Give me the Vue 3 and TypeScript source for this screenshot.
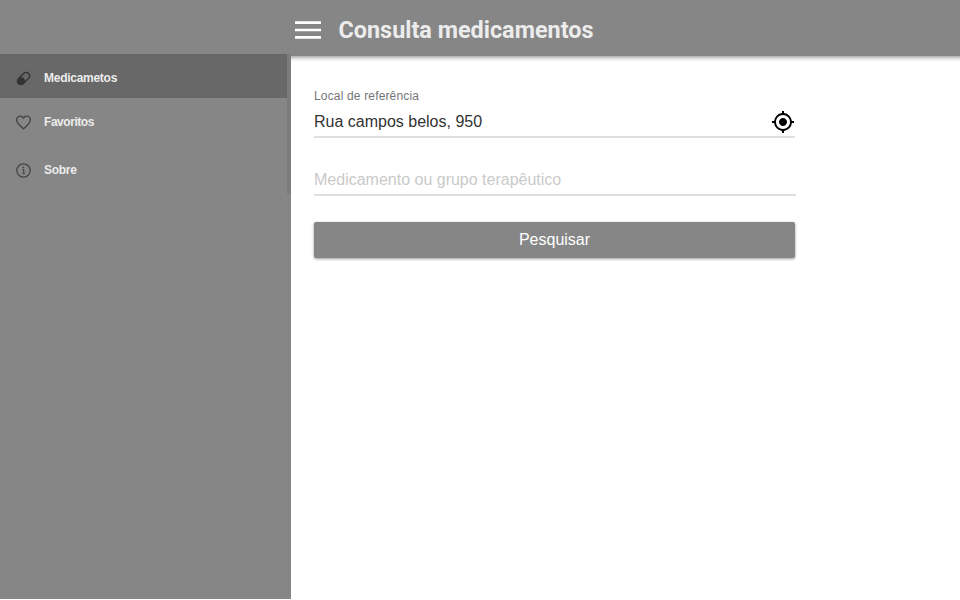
<script setup lang="ts">
import { ref } from 'vue'

interface MenuItem {
  id: string
  label: string
}

const items: MenuItem[] = [
  { id: 'pill', label: 'Medicametos' },
  { id: 'heart', label: 'Favoritos' },
  { id: 'info', label: 'Sobre' },
]
const active = ref('pill')
const place = ref('Rua campos belos, 950')
const query = ref('')
</script>

<template>
  <div class="app">
    <header class="topbar">
      <button class="menu" aria-label="Menu">
        <svg viewBox="0 0 26 18">
          <path d="M0 1.6h26M0 9h26M0 16.4h26" stroke="#fff" stroke-width="2.6" />
        </svg>
      </button>
      <h1>Consulta medicamentos</h1>
    </header>
    <div class="body">
      <aside class="sidebar">
        <nav class="nav">
          <a
            v-for="item in items"
            :key="item.id"
            class="item"
            :class="[item.id, { active: item.id === active }]"
            @click="active = item.id"
          >
            <svg v-if="item.id === 'pill'" class="icon" viewBox="0 0 16 16">
              <g transform="rotate(45 8 8)">
                <rect x="4.7" y="1.2" width="6.6" height="13.6" rx="3.3" fill="none" stroke="#333" stroke-width="1.3" />
                <path d="M4.7 9L8 7.4L11.3 9V11.5a3.3 3.3 0 0 1-6.6 0z" fill="#333" />
              </g>
            </svg>
            <svg v-else-if="item.id === 'heart'" class="icon" viewBox="0 0 16 16">
              <path d="M8 13.9C4.2 10.8 1.5 8.4 1.5 5.4A3.4 3.4 0 0 1 4.9 2C6.2 2 7.3 2.7 8 3.7C8.7 2.7 9.8 2 11.1 2A3.4 3.4 0 0 1 14.5 5.4C14.5 8.4 11.8 10.8 8 13.9Z" fill="none" stroke="#444" stroke-width="1.3" />
            </svg>
            <svg v-else class="icon" viewBox="0 0 16 16">
              <circle cx="8" cy="8" r="6.3" fill="none" stroke="#444" stroke-width="1.2" />
              <path d="M7 7.2h1.2v3.6M6.9 10.9h2.4" fill="none" stroke="#444" stroke-width="1" />
              <circle cx="7.9" cy="5.1" r=".75" fill="#444" />
            </svg>
            <span>{{ item.label }}</span>
          </a>
        </nav>
        <div class="track"></div>
      </aside>
      <main class="content">
        <form class="form" @submit.prevent>
          <label class="label" for="place">Local de referência</label>
          <div class="field">
            <input id="place" v-model="place" type="text" />
            <svg class="locate" viewBox="0 0 24 24">
              <path d="M12 8c-2.21 0-4 1.79-4 4s1.79 4 4 4 4-1.79 4-4-1.79-4-4-4zm8.94 3A8.994 8.994 0 0 0 13 3.06V1h-2v2.06A8.994 8.994 0 0 0 3.06 11H1v2h2.06A8.994 8.994 0 0 0 11 20.94V23h2v-2.06A8.994 8.994 0 0 0 20.94 13H23v-2h-2.06zM12 19c-3.87 0-7-3.13-7-7s3.13-7 7-7 7 3.13 7 7-3.13 7-7 7z" />
            </svg>
          </div>
          <div class="field second">
            <input v-model="query" type="text" placeholder="Medicamento ou grupo terapêutico" />
          </div>
          <button class="submit" type="submit">Pesquisar</button>
        </form>
      </main>
    </div>
  </div>
</template>

<style>
body {
  background: #fff;
  overflow: hidden;
}
</style>

<style scoped>
.app {
  width: 960px;
  height: 599px;
  display: flex;
  flex-direction: column;
  font-family: "Liberation Sans", Arial, sans-serif;
  background: #fff;
}
.topbar {
  height: 54px;
  flex: none;
  box-sizing: border-box;
  display: flex;
  align-items: center;
  padding: 6px 0 0 295px;
  gap: 17.5px;
  background: #868686;
}
.menu {
  width: 26px;
  height: 18px;
  padding: 0;
  border: 0;
  background: none;
}
.menu svg {
  display: block;
  width: 26px;
  height: 18px;
}
h1 {
  margin: 0;
  font: 700 23.4px/30px Roboto, sans-serif;
  color: #ececec;
}
.body {
  flex: 1;
  display: flex;
}
.sidebar {
  width: 291px;
  flex: none;
  display: flex;
  background: #868686;
}
.nav {
  width: 287px;
}
.track {
  width: 4px;
  height: 140px;
  background: #7b7b7b;
}
.item {
  display: flex;
  align-items: center;
  height: 44px;
  box-sizing: border-box;
  padding: 4px 0 0 15px;
  gap: 12px;
  font-size: 12px;
  font-weight: 700;
  letter-spacing: -0.27px;
  color: #ececec;
}
.item.heart {
  letter-spacing: -0.45px;
}
.item.active {
  background: #686868;
}
.item.info {
  margin-top: 4px;
}
.icon {
  width: 17px;
  height: 17px;
}
.content {
  flex: 1;
  padding: 33px 0 0 23px;
  border-top: 2px solid #868686;
  background: linear-gradient(#b0b0b0, #d4d4d4 2px, #f4f4f4 4px, #fff 6px) padding-box;
}
.form {
  width: 481px;
  display: flex;
  flex-direction: column;
}
.label {
  font-size: 12px;
  line-height: 14px;
  letter-spacing: 0.16px;
  color: #757575;
}
.field {
  display: flex;
  align-items: center;
  height: 35px;
  box-sizing: border-box;
  padding-top: 5px;
  border-bottom: 2px solid #e0e0e0;
}
.field.second {
  width: 482px;
  margin-top: 23px;
}
.field input {
  flex: 1;
  min-width: 0;
  padding: 0;
  border: 0;
  outline: 0;
  background: none;
  font: 16px/20px "Liberation Sans", Arial, sans-serif;
  color: #333;
}
.field input::placeholder {
  color: #cacaca;
  opacity: 1;
}
.locate {
  width: 24px;
  height: 24px;
}
.submit {
  height: 36px;
  margin-top: 26px;
  padding: 0;
  border: 0;
  border-radius: 2px;
  background: #868686;
  color: #fff;
  font: 16px/36px "Liberation Sans", Arial, sans-serif;
  box-shadow: 0 1px 3px rgba(0, 0, 0, .4);
}
</style>
